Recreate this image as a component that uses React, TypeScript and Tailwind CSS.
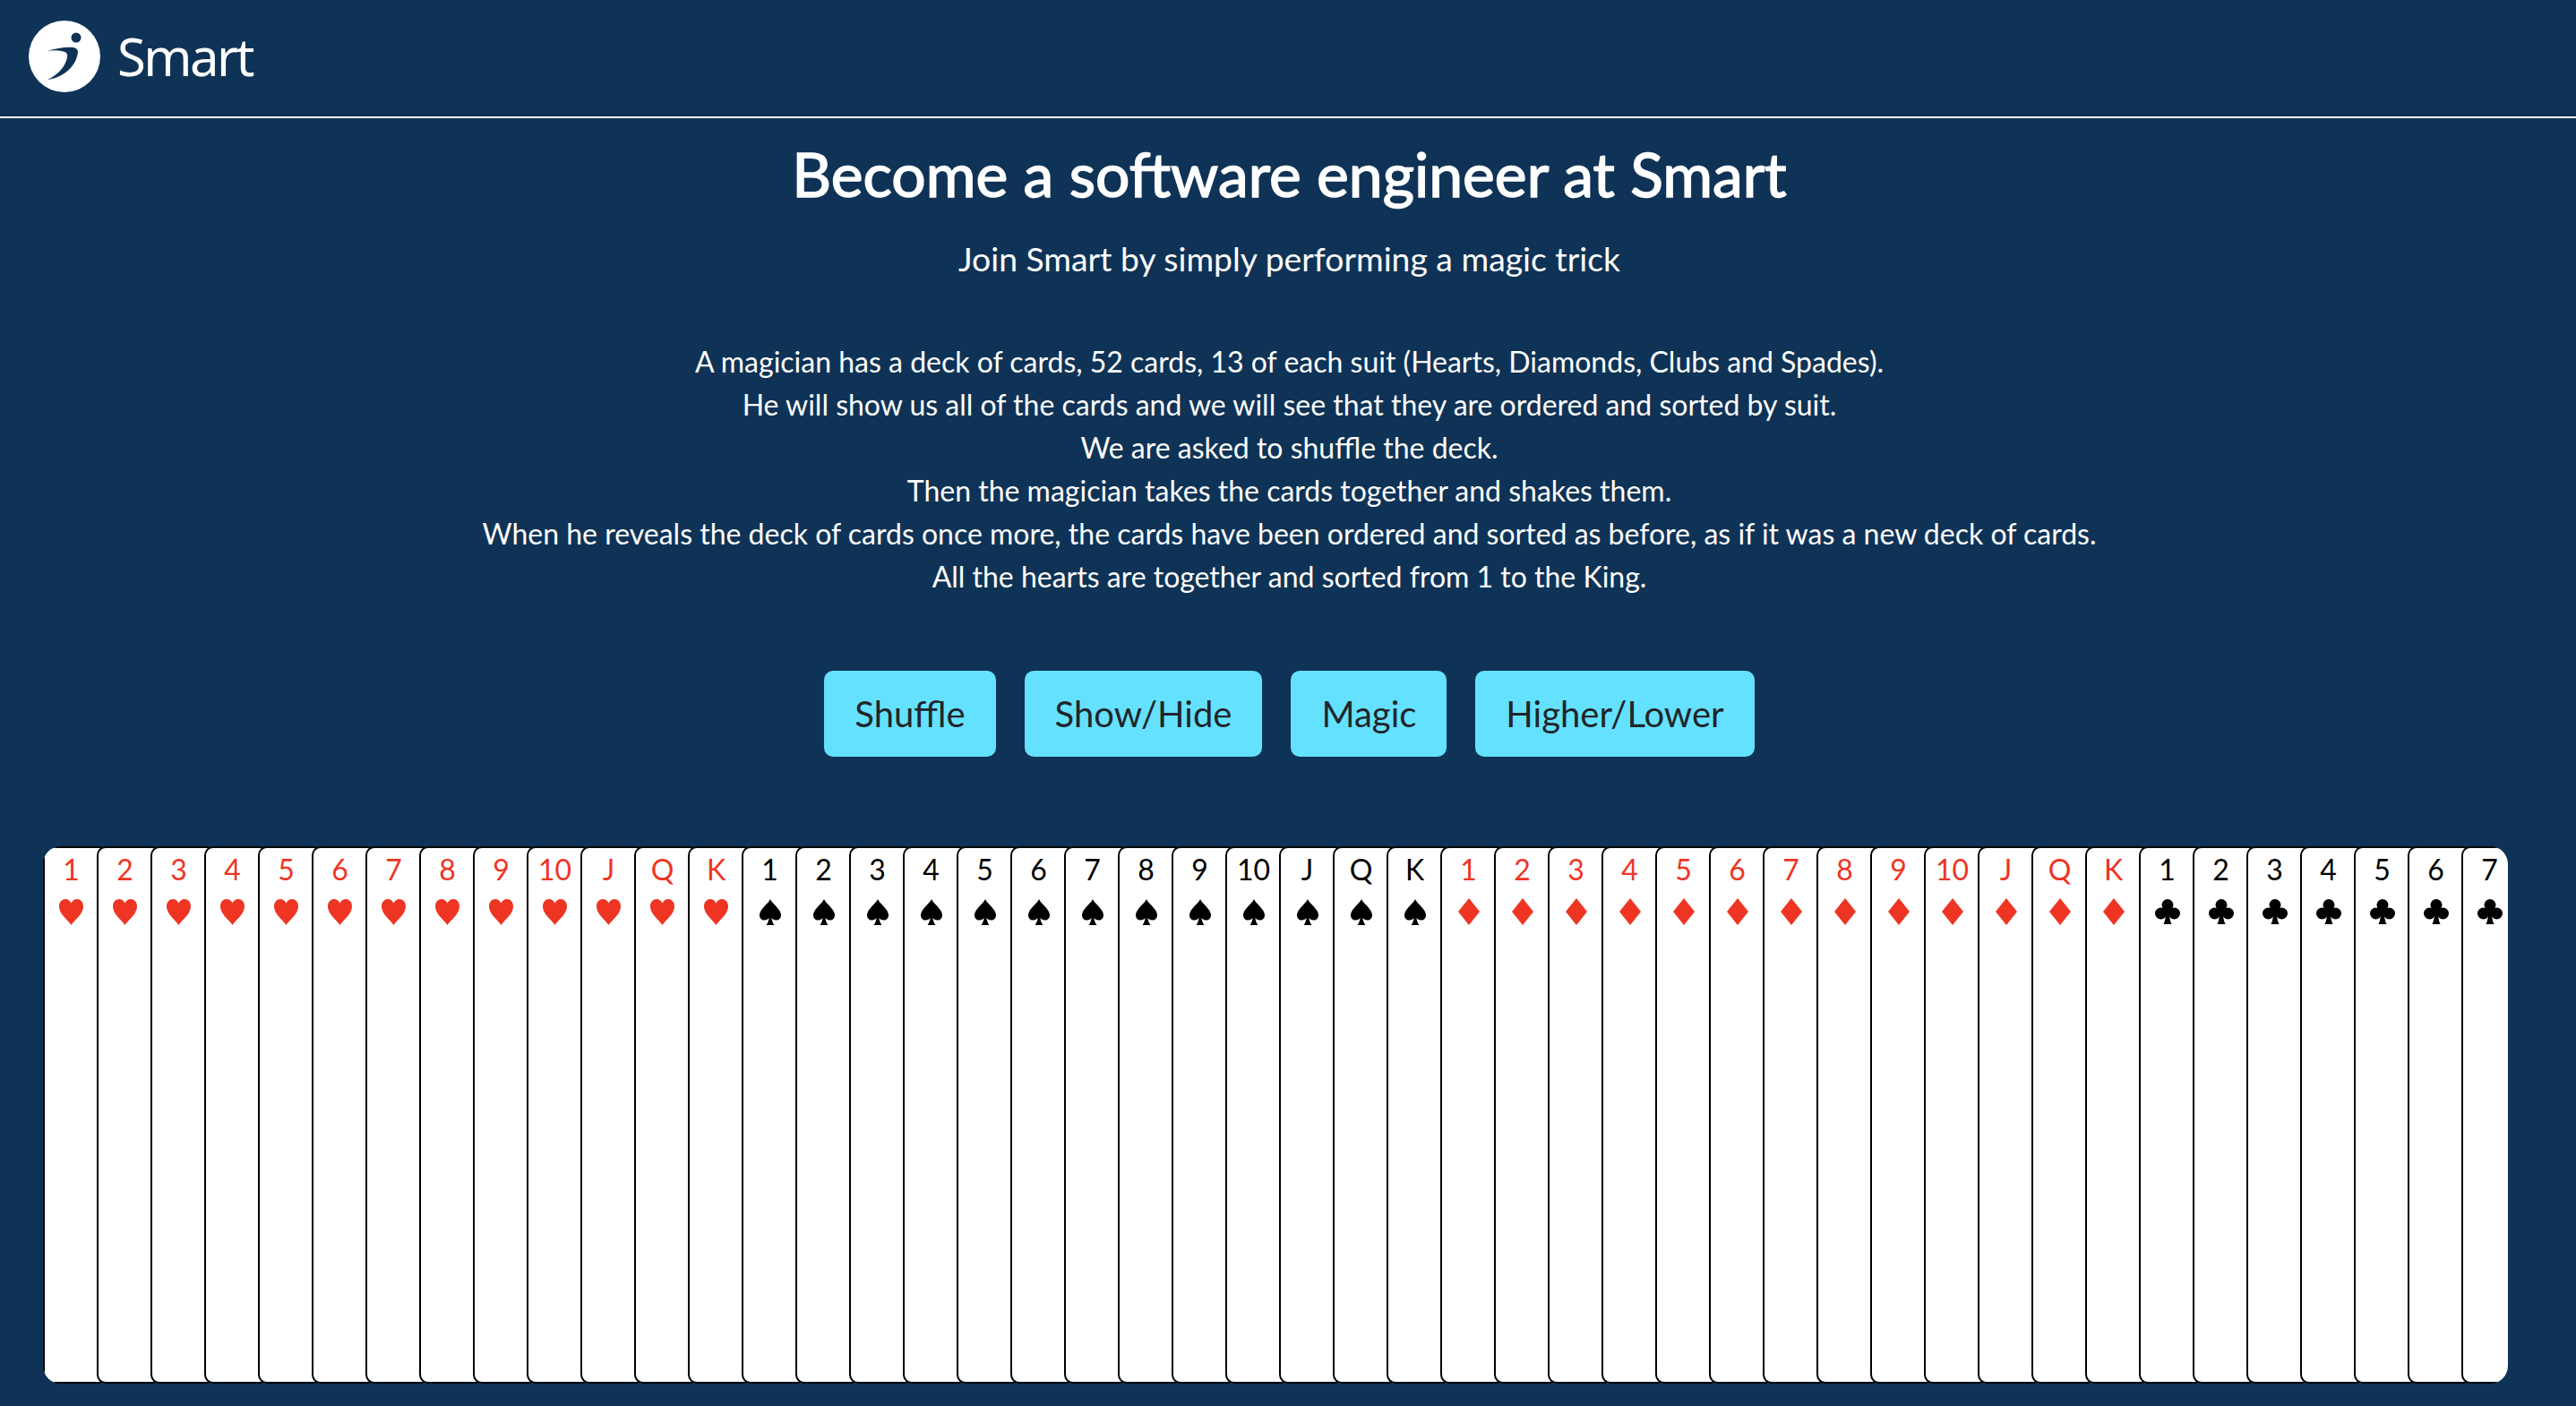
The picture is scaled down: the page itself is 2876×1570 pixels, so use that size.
import React from 'react';

type Suit = 'hearts' | 'spades' | 'diamonds' | 'clubs';

const RANKS = ['1', '2', '3', '4', '5', '6', '7', '8', '9', '10', 'J', 'Q', 'K'];
const SUITS: Suit[] = ['hearts', 'spades', 'diamonds', 'clubs'];

const LINES = [
  'A magician has a deck of cards, 52 cards, 13 of each suit (Hearts, Diamonds, Clubs and Spades).',
  'He will show us all of the cards and we will see that they are ordered and sorted by suit.',
  'We are asked to shuffle the deck.',
  'Then the magician takes the cards together and shakes them.',
  'When he reveals the deck of cards once more, the cards have been ordered and sorted as before, as if it was a new deck of cards.',
  'All the hearts are together and sorted from 1 to the King.',
];

const BUTTONS = ['Shuffle', 'Show/Hide', 'Magic', 'Higher/Lower'];

function SuitIcon({ suit }: { suit: Suit }) {
  if (suit === 'hearts') {
    return (
      <svg viewBox="0 0 27 29" className="w-[27px] h-[29px]" fill="#ee3524">
        <path d="M13.5 29C11 24.5 0 17 0 8 0 3.2 3.2 0 7 0c3 0 5.3 1.8 6.5 4.6C14.700 1.800 17 0 20 0c3.800 0 7 3.200 7 8 0 9-11 16.500-13.500 21z" />
      </svg>
    );
  }
  if (suit === 'diamonds') {
    return (
      <svg viewBox="0 0 24 30" className="w-[24px] h-[30px]" fill="#ee3524">
        <path d="M12 0 24 15 12 30 0 15z" />
      </svg>
    );
  }
  if (suit === 'spades') {
    return (
      <svg viewBox="0 0 24 29" className="w-[24px] h-[29px]" fill="#000">
        <path d="M12 0C10 5 0 11 0 18c0 3.500 2.500 5.500 5.300 5.500 2.400 0 4.300-1 5.300-2.700C10.300 24 9.200 27 7.500 29h9c-1.700-2-2.800-5-3.100-8.200 1 1.700 2.900 2.700 5.300 2.700C21.500 23.500 24 21.500 24 18 24 11 14 5 12 0z" />
      </svg>
    );
  }
  return (
    <svg viewBox="0 0 28 28" className="w-[28px] h-[28px]" fill="#000">
      <circle cx="14" cy="6.500" r="6.500" />
      <circle cx="6.500" cy="16" r="6.500" />
      <circle cx="21.500" cy="16" r="6.500" />
      <path d="M12 10h4v6c0 4 1 9 2.500 12h-9C11 25 12 20 12 16z" />
    </svg>
  );
}

function Card({ rank, suit }: { rank: string; suit: Suit }) {
  const red = suit === 'hearts' || suit === 'diamonds';
  return (
    <div className="w-[72px] h-[600px] mr-[-12px] shrink-0 bg-white border-2 border-black rounded-[10px] box-border">
      <div className={`w-[59px] flex flex-col items-center ${red ? 'text-[#ee3524]' : 'text-black'}`}>
        <span className="text-[32px] leading-[40px] mt-[4px]">{rank}</span>
        <span className="mt-[12px] h-[30px] flex items-center"><SuitIcon suit={suit} /></span>
      </div>
    </div>
  );
}

function Logo() {
  return (
    <svg viewBox="0 0 80 80" className="w-[80px] h-[80px]">
      <circle cx="40" cy="40" r="40" fill="#fff" />
      <circle cx="53" cy="19" r="5.500" fill="#0f3356" />
      <path d="M21 34c9-3 21-5 29-4 5 1 6 4 4 10-3 12-16 24-33 26 11-5 20-14 22-25 1-5-2-6-6-7-5-1-11-1-16 0z" fill="#0f3356" />
    </svg>
  );
}

export default function App() {
  const cards = SUITS.flatMap(suit => RANKS.map(rank => ({ suit, rank }))).slice(0, 46);

  return (
    <div className="min-h-screen bg-[#0f3356] text-white overflow-hidden font-['Lato',sans-serif]">
      <header className="h-[132px] border-b-2 border-white flex items-center pl-8 pb-1">
        <Logo />
        <span className="ml-[19px] text-[58px] font-normal tracking-[-2.500px] leading-none font-['Noto_Sans',sans-serif]">Smart</span>
      </header>

      <main className="flex flex-col items-center pl-[3px]">
        <h1 className="mt-[20px] text-[67.800px] leading-[84px] font-normal [-webkit-text-stroke:1.500px_white]">Become a software engineer at Smart</h1>
        <h2 className="mt-[31px] text-[37.300px] leading-[44px] font-normal">Join Smart by simply performing a magic trick</h2>
        <div className="mt-[69px] text-[32px] leading-[48px] text-center">
          {LINES.map(line => <p key={line}>{line}</p>)}
        </div>
        <div className="mt-[81px] flex gap-[32px]">
          {BUTTONS.map(label => (
            <button key={label} className="h-[96px] px-[34px] rounded-[10px] bg-[#64e1ff] text-[#212529] text-[40px]">
              {label}
            </button>
          ))}
        </div>
      </main>

      <section className="mt-[100px] ml-[48px] w-[2752px] h-[600px] flex overflow-hidden rounded-[20px]">
        {cards.map(c => <Card key={c.suit + c.rank} rank={c.rank} suit={c.suit} />)}
      </section>
    </div>
  );
}
